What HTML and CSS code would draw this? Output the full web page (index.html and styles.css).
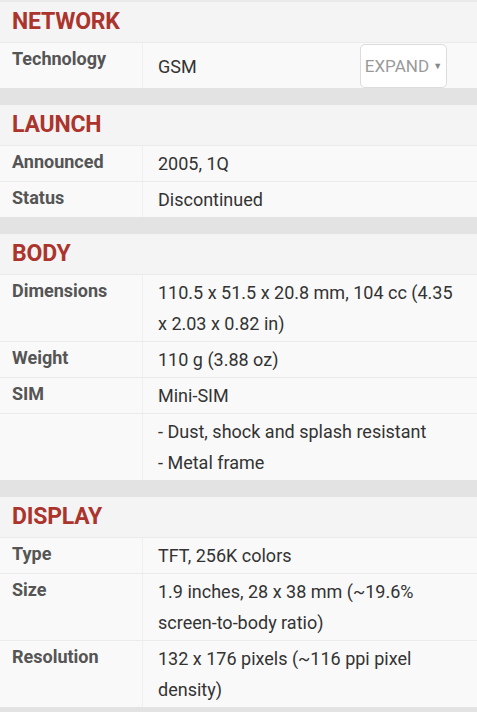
FILE: index.html
```html
<!DOCTYPE html>
<html>
<head>
<meta charset="utf-8">
<link rel="stylesheet" href="styles.css">
</head>
<body>
<div class="page">
  <div class="topline"></div>

  <section class="spec">
    <h2 class="head">NETWORK</h2>
    <div class="row tall">
      <div class="label">Technology</div>
      <div class="value center"><span>GSM</span><button class="expand">EXPAND <span class="tri">▼</span></button></div>
    </div>
  </section>
  <div class="sep"></div>

  <section class="spec">
    <h2 class="head">LAUNCH</h2>
    <div class="row"><div class="label">Announced</div><div class="value">2005, 1Q</div></div>
    <div class="row"><div class="label">Status</div><div class="value">Discontinued</div></div>
  </section>
  <div class="sep"></div>

  <section class="spec">
    <h2 class="head">BODY</h2>
    <div class="row"><div class="label">Dimensions</div><div class="value">110.5 x 51.5 x 20.8 mm, 104 cc (4.35 x 2.03 x 0.82 in)</div></div>
    <div class="row"><div class="label">Weight</div><div class="value">110 g (3.88 oz)</div></div>
    <div class="row"><div class="label">SIM</div><div class="value">Mini-SIM</div></div>
    <div class="row"><div class="label"></div><div class="value">- Dust, shock and splash resistant<br>- Metal frame</div></div>
  </section>
  <div class="sep"></div>

  <section class="spec">
    <h2 class="head">DISPLAY</h2>
    <div class="row"><div class="label">Type</div><div class="value">TFT, 256K colors</div></div>
    <div class="row"><div class="label">Size</div><div class="value">1.9 inches, 28 x 38 mm (~19.6% screen-to-body ratio)</div></div>
    <div class="row"><div class="label">Resolution</div><div class="value">132 x 176 pixels (~116 ppi pixel density)</div></div>
  </section>
  <div class="sep"></div>
</div>
</body>
</html>
```

FILE: styles.css
```css
html, body {
  margin: 0;
  padding: 0;
  background: #f9f9f9;
}
body {
  font-family: Roboto, "Liberation Sans", sans-serif;
  width: 477px;
  overflow: hidden;
}
.page {
  display: flex;
  flex-direction: column;
}
.topline {
  height: 2px;
  background: #e9e9e9;
}
.spec {
  display: flex;
  flex-direction: column;
}
.head {
  margin: 0;
  height: 40px;
  line-height: 40px;
  padding-left: 12px;
  font-size: 23px;
  font-weight: 700;
  color: #ab352d;
  background: #f4f4f4;
  letter-spacing: -0.2px;
}
.row {
  display: grid;
  grid-template-columns: 143px 1fr;
  border-top: 1px solid #ebebeb;
  background: #f9f9f9;
}
.label {
  border-right: 1px solid #efefef;
  padding: 0 0 2px 12px;
  font-size: 18px;
  line-height: 31px;
  font-weight: 700;
  color: #555;
}
.value {
  padding: 2px 20px 2px 15px;
  font-size: 18px;
  line-height: 31px;
  color: #333;
}
.value.center {
  display: flex;
  align-items: center;
  justify-content: space-between;
  padding: 1px 30px 0 15px;
}
.expand {
  width: 87px;
  height: 44px;
  border: 1px solid #dcdcdc;
  border-radius: 5px;
  background: #fff;
  font-family: Roboto, "Liberation Sans", sans-serif;
  font-size: 17px;
  color: #9a9a9a;
  padding: 0;
  text-align: center;
  white-space: nowrap;
}
.tri {
  font-size: 9px;
  vertical-align: 3px;
  color: #888;
}
.sep {
  height: 17px;
  background: #e2e3e2;
}
```
